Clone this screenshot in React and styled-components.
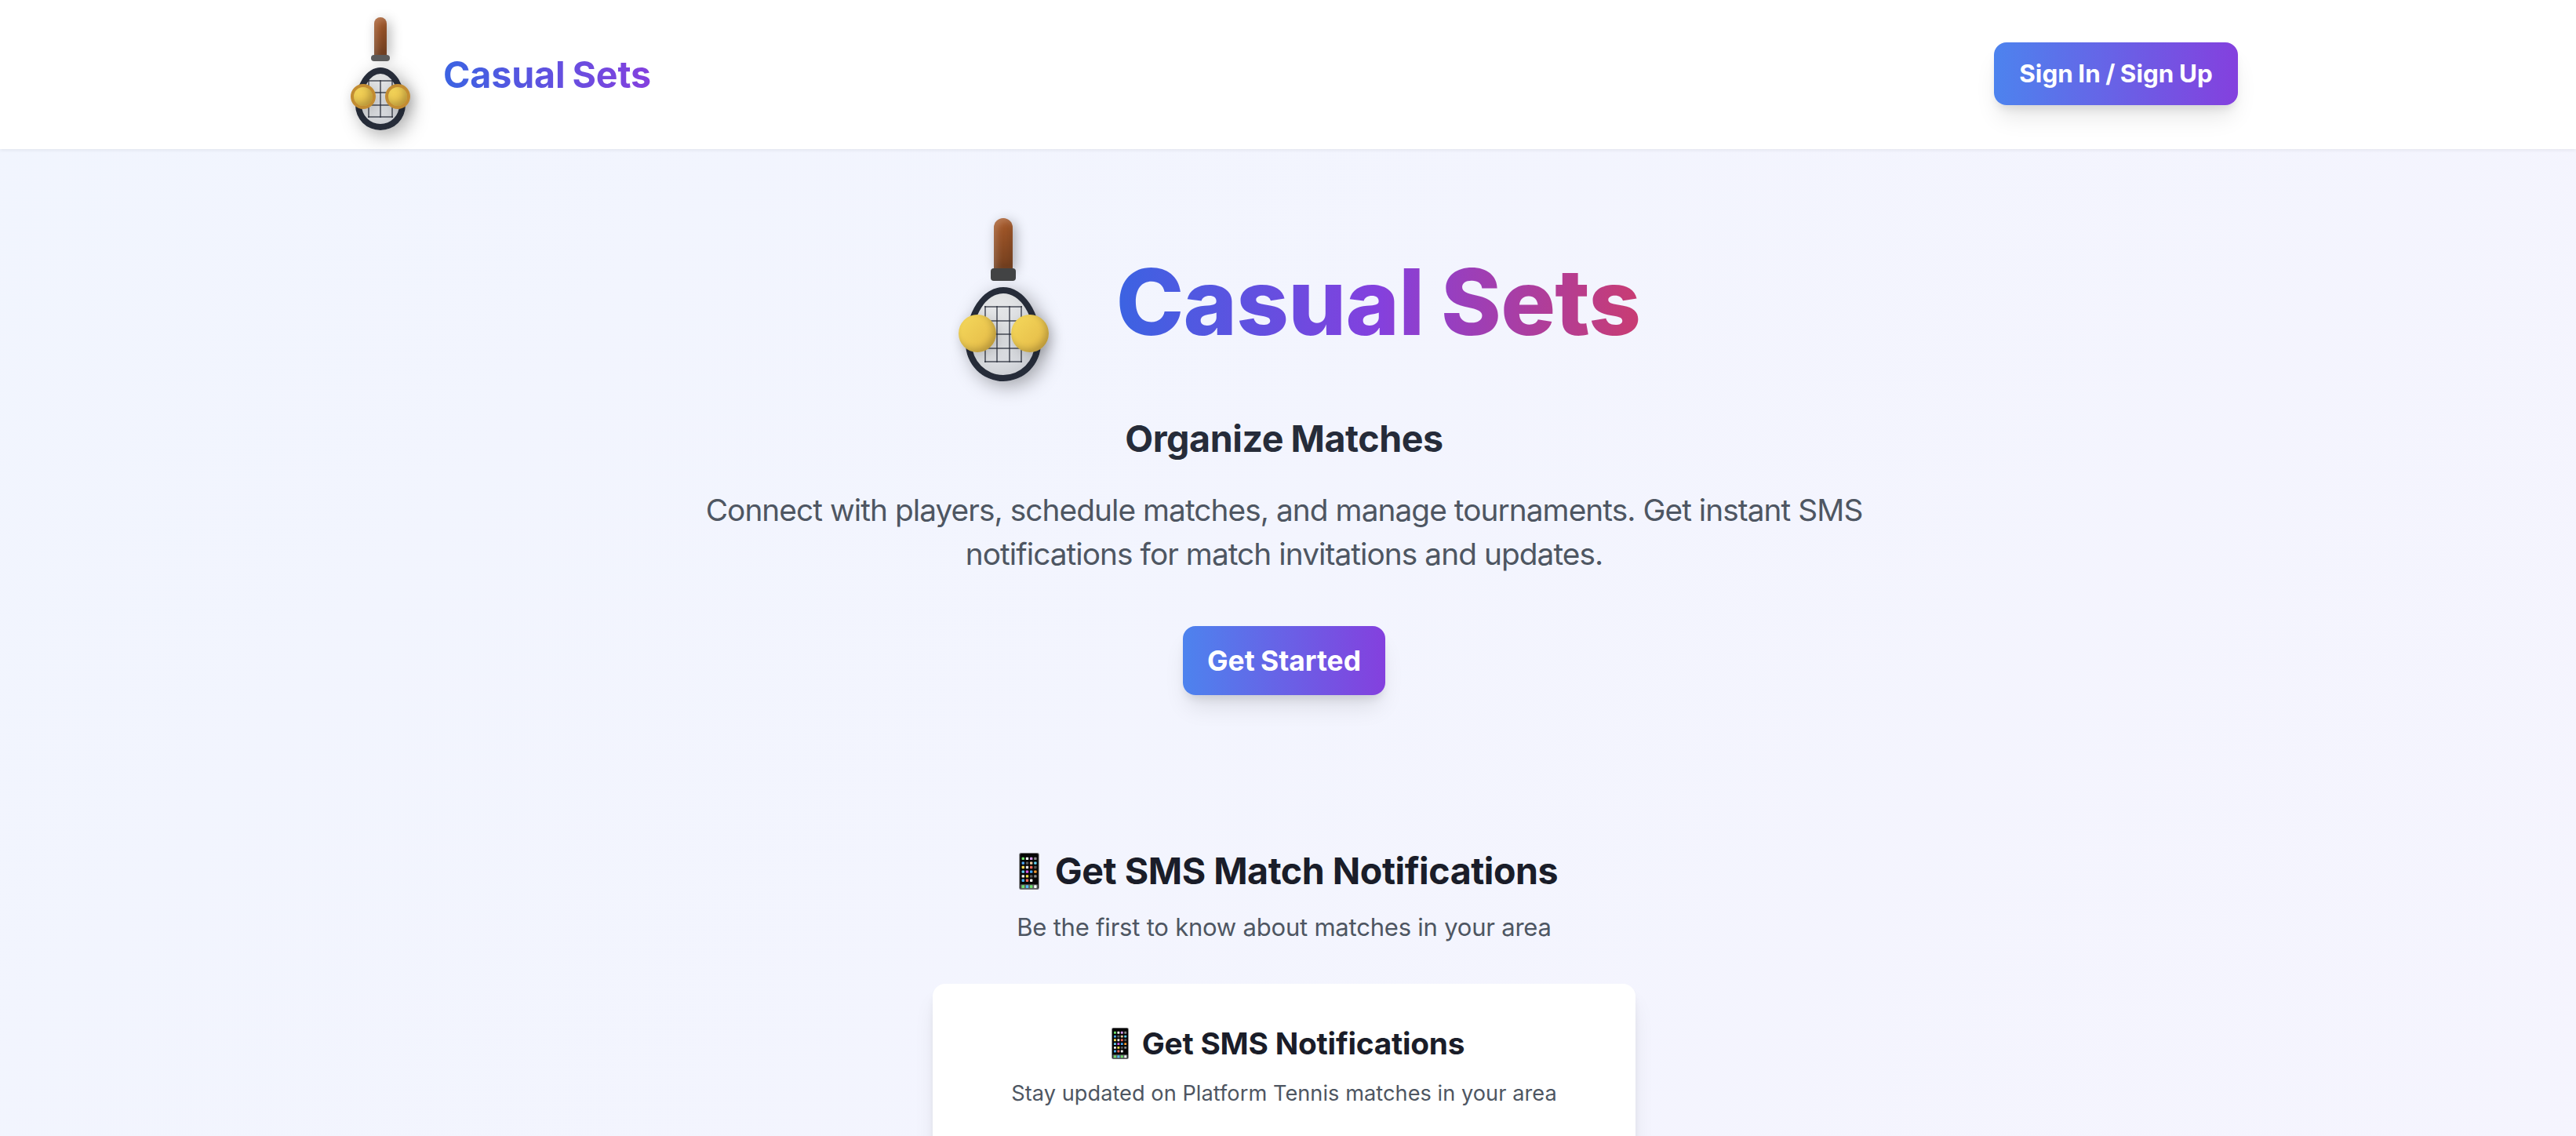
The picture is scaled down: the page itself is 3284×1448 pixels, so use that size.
import React from "react";
import styled, { createGlobalStyle } from "styled-components";

const GlobalStyle = createGlobalStyle`
  *, *::before, *::after {
    box-sizing: border-box;
  }

  body {
    margin: 0;
    font-family: "Inter", "Liberation Sans", sans-serif;
    -webkit-font-smoothing: antialiased;
  }

  h1, h2, h3, p {
    margin: 0;
  }
`;

const palette = {
  blue: "#3b63e2",
  violet: "#8440de",
  pink: "#c93c72",
  heading: "#1a1d29",
  subheading: "#262c39",
  body: "#4e5662",
};

const Page = styled.div`
  height: 100vh;
  overflow: hidden;
  background: linear-gradient(to bottom right, #f1f5fe, #f7f4fe) no-repeat;
  background-size: 100% 4080px;
`;

const Header = styled.header`
  position: relative;
  height: 190px;
  padding-right: 10px;
  background: #fff;
  box-shadow: 0 2px 4px rgba(0, 0, 0, 0.06);
`;

const HeaderInner = styled.div`
  display: flex;
  align-items: center;
  justify-content: space-between;
  max-width: 2560px;
  height: 188px;
  margin: 0 auto;
  padding: 0 64px;
`;

const Brand = styled.div`
  display: flex;
  align-items: center;
  gap: 16px;
`;

const BrandName = styled.span`
  padding-top: 2px;
  font-size: 46.56px;
  font-weight: 750;
  line-height: 64px;
  letter-spacing: -0.1px;
  word-spacing: -2px;
  color: transparent;
  background: linear-gradient(to right, ${palette.blue}, ${palette.violet});
  background-clip: text;
`;

const Button = styled.button`
  height: ${({ $large }) => ($large ? "88px" : "80px")};
  width: ${({ $large }) => ($large ? "258px" : "311px")};
  padding: 0;
  border: 0;
  border-radius: 16px;
  font-family: inherit;
  font-size: ${({ $large }) => ($large ? "35.4px" : "31.4px")};
  font-weight: 650;
  letter-spacing: ${({ $large }) => ($large ? "0" : "0.03px")};
  word-spacing: -1px;
  color: #fff;
  background: linear-gradient(to right, #4d83ee, ${palette.violet});
  box-shadow: 0 20px 30px -6px rgba(0, 0, 0, 0.1),
    0 8px 12px -4px rgba(0, 0, 0, 0.1);
`;

// Racket

const RacketBox = styled.div`
  position: relative;
  display: flex;
  flex-direction: column;
  align-items: center;
  width: ${({ $large }) => ($large ? "192px" : "128px")};
`;

const Handle = styled.div`
  width: ${({ $large }) => ($large ? "24px" : "16px")};
  height: ${({ $large }) => ($large ? "64px" : "48px")};
  border-radius: 12px 12px 0 0;
  background: linear-gradient(to bottom, #a85a2a, #75401f);
  box-shadow: inset 4px 4px 8px rgba(255, 255, 255, 0.2),
    inset -4px -4px 8px rgba(0, 0, 0, 0.1), 4px 4px 16px rgba(0, 0, 0, 0.3);
`;

const Collar = styled.div`
  position: relative;
  width: ${({ $large }) => ($large ? "32px" : "24px")};
  height: ${({ $large }) => ($large ? "16px" : "8px")};
  margin-bottom: 8px;
  border-radius: 4px;
  background: ${({ $large }) => ($large ? "#424344" : "#5b5b5b")};
`;

const Head = styled.div`
  display: flex;
  justify-content: center;
  width: ${({ $large }) => ($large ? "96px" : "64px")};
  height: ${({ $large }) => ($large ? "120px" : "80px")};
  padding-top: ${({ $large }) => ($large ? "16px" : "8px")};
  border: 8px solid ${palette.subheading};
  border-radius: 50% 50% 50% 50% / 60% 60% 40% 40%;
  background: linear-gradient(135deg, #eceded, #cfd2d8);
  box-shadow: inset 0 0 16px rgba(0, 0, 0, 0.06),
    6px 6px 24px rgba(0, 0, 0, 0.34);
`;

const Strings = styled.svg`
  display: block;
  flex: none;
  stroke: ${palette.subheading};
  stroke-width: 2;
  stroke-opacity: 0.62;
  fill: none;
`;

const Ball = styled.div`
  position: absolute;
  top: ${({ $large }) => ($large ? "123px" : "85px")};
  left: ${({ $large, $right }) =>
    $large ? ($right ? "106px" : "39px") : $right ? "70px" : "26px"};
  width: ${({ $large }) => ($large ? "48px" : "32px")};
  height: ${({ $large }) => ($large ? "48px" : "32px")};
  border: ${({ $large }) => ($large ? "0" : "4px solid #c28c32")};
  border-radius: 50%;
  background: linear-gradient(135deg, #f5d95c, #e3b745);
  box-shadow: inset -4px -4px 8px rgba(0, 0, 0, 0.2),
    4px 4px 16px rgba(0, 0, 0, 0.18);
`;

function Racket({ large }) {
  const w = large ? 48 : 32;
  const h = large ? 72 : 48;
  const cols = large ? [1, 16, 32, 47] : [1, 16, 31];
  const rows = large ? [1, 19, 36, 54, 71] : [1, 16, 32, 47];

  return (
    <RacketBox $large={large}>
      <Handle $large={large} />
      <Collar $large={large} />
      <Head $large={large}>
        <Strings width={w} height={h} viewBox={`0 0 ${w} ${h}`}>
          {cols.map((x) => (
            <path key={x} d={`M${x} 0V${h}`} />
          ))}
          {rows.map((y) => (
            <path key={y} d={`M0 ${y}H${w}`} />
          ))}
        </Strings>
      </Head>
      <Ball $large={large} />
      <Ball $large={large} $right />
    </RacketBox>
  );
}

// Phone

const PhoneSvg = styled.svg`
  display: block;
  flex: none;
`;

const appColors = [
  ["#6fe36b", "#f4f4f4", "#d69bf0", "#8a8a8a"],
  ["#4fa9f5", "#5c5c5c", "#e8c9a0", "#63d3f7"],
  ["#f7dc55", "#e6e6e6", "#ee6a5c", "#555555"],
  ["#62cdf0", "#d65be8", "#45a6f5", "#f59a2f"],
  ["#f4f4f4", "#f2e04c", "#5a5a5a", "#8a8a8a"],
  ["#4fb0f7", "#ee6a5c", "#f4f4f4"],
];
const dockColors = ["#6fe36b", "#55bdf5", "#6fe36b", "#f6f6f6"];
const colX = [10, 25.5, 41, 56.5];
const rowY = [17, 34, 50, 67, 84, 100];

function Phone({ width, height }) {
  return (
    <PhoneSvg width={width} height={height} viewBox="0 0 76 140">
      <rect width="76" height="140" rx="7" fill="#77777a" />
      <rect x="3" y="3" width="70" height="134" rx="5" fill="#060606" />
      <rect x="5" y="120" width="66" height="17" rx="3" fill="#5d6060" />
      {appColors.map((row, r) =>
        row.map((fill, c) => (
          <rect key={`${r}-${c}`} x={colX[c]} y={rowY[r]} width="10" height="10" rx="2" fill={fill} />
        ))
      )}
      {dockColors.map((fill, c) => (
        <rect key={c} x={colX[c]} y="123" width="10" height="11" rx="2" fill={fill} />
      ))}
    </PhoneSvg>
  );
}

const Main = styled.main`
  display: flex;
  flex-direction: column;
  align-items: center;
  padding: 88px 10px 0 0;
  text-align: center;
`;

const TitleRow = styled.div`
  display: flex;
  align-items: center;
  gap: 48px;
  height: 208px;
`;

const Title = styled.h1`
  padding-top: 5px;
  font-size: 116.4px;
  font-weight: 760;
  line-height: 150px;
  letter-spacing: -0.75px;
  word-spacing: -3px;
  color: transparent;
  background: linear-gradient(
    to right,
    ${palette.blue},
    ${palette.violet},
    ${palette.pink}
  );
  background-clip: text;
`;

const Tagline = styled.h2`
  margin-top: 41px;
  font-size: 46.56px;
  font-weight: 700;
  line-height: 64px;
  letter-spacing: -0.43px;
  word-spacing: -1px;
  color: ${palette.subheading};
`;

const Lead = styled.p`
  width: 1536px;
  margin: 31px 0 64px;
  font-size: 38.8px;
  font-weight: 430;
  line-height: 56px;
  letter-spacing: -0.94px;
  color: ${palette.body};
`;

const SectionTitle = styled.h2`
  display: flex;
  align-items: center;
  gap: 20px;
  margin-top: 192px;
  padding-left: 11px;
  font-size: 46.56px;
  font-weight: 740;
  line-height: 64px;
  letter-spacing: -0.46px;
  color: ${palette.heading};
`;

const SectionText = styled.p`
  margin: 16px 0 48px;
  font-size: 31.04px;
  font-weight: 430;
  line-height: 48px;
  letter-spacing: -0.23px;
  color: ${palette.body};
`;

const Card = styled.section`
  display: flex;
  flex-direction: column;
  align-items: center;
  width: 896px;
  height: 800px;
  padding: 48px;
  border-radius: 16px;
  background: #fff;
  box-shadow: 0 20px 30px -6px rgba(0, 0, 0, 0.1),
    0 8px 12px -4px rgba(0, 0, 0, 0.1);
`;

const CardTitle = styled.h3`
  display: flex;
  align-items: center;
  gap: 17px;
  padding-left: 10px;
  font-size: 38.8px;
  font-weight: 730;
  line-height: 56px;
  letter-spacing: -0.22px;
  color: ${palette.heading};
`;

const CardText = styled.p`
  margin-top: 16px;
  font-size: 27.16px;
  font-weight: 430;
  line-height: 40px;
  letter-spacing: 0.05px;
  color: ${palette.body};
`;

export default function App() {
  return (
    <>
      <GlobalStyle />
      <Page>
        <Header>
          <HeaderInner>
            <Brand>
              <Racket />
              <BrandName>Casual Sets</BrandName>
            </Brand>
            <Button>Sign In / Sign Up</Button>
          </HeaderInner>
        </Header>
        <Main>
          <TitleRow>
            <Racket large />
            <Title>Casual Sets</Title>
          </TitleRow>
          <Tagline>Organize Matches</Tagline>
          <Lead>
            Connect with players, schedule matches, and manage tournaments. Get instant SMS
            <br />
            notifications for match invitations and updates.
          </Lead>
          <Button $large>Get Started</Button>
          <SectionTitle>
            <Phone width={26} height={47} />
            Get SMS Match Notifications
          </SectionTitle>
          <SectionText>Be the first to know about matches in your area</SectionText>
          <Card>
            <CardTitle>
              <Phone width={22} height={40} />
              Get SMS Notifications
            </CardTitle>
            <CardText>Stay updated on Platform Tennis matches in your area</CardText>
          </Card>
        </Main>
      </Page>
    </>
  );
}
